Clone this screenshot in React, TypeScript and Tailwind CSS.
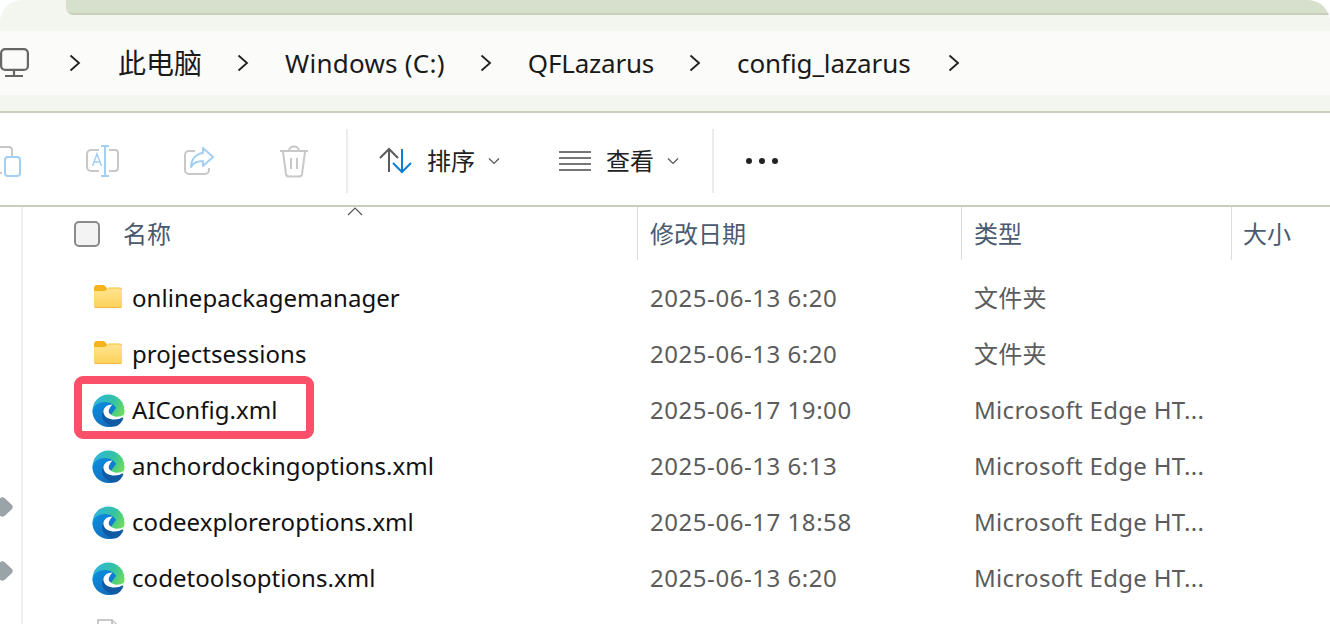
import { useId } from 'react';

const sans = "font-['Noto_Sans','Noto_Sans_CJK_SC',sans-serif]";

function Chevron() {
  return (
    <svg width="12" height="22" viewBox="0 0 12 22" fill="none" stroke="#1f1f1f" strokeWidth="1.8">
      <path d="M1.5 3.5 10 11 1.5 18.5" />
    </svg>
  );
}

function SmallChevron() {
  return (
    <svg width="12" height="8" viewBox="0 0 12 8" fill="none" stroke="#555" strokeWidth="1.2">
      <path d="M1 1.5 6 6.5 11 1.5" />
    </svg>
  );
}

function Folder() {
  const id = useId();
  return (
    <svg width="28" height="23" viewBox="0 0 28 23">
      <defs>
        <linearGradient id={id} x1="0" y1="0" x2="0" y2="1">
          <stop offset="0" stopColor="#ffe48f" />
          <stop offset="1" stopColor="#fdd25c" />
        </linearGradient>
      </defs>
      <path d="M0 3a3 3 0 0 1 3-3h7l3 3v4H0z" fill="#f5b41c" />
      <path d="M0 6h11l3-3h12a2 2 0 0 1 2 2v16a1.500 1.500 0 0 1-1.500 1.500h-25A1.500 1.500 0 0 1 0 21z" fill={`url(#${id})`} />
      <path d="M14 3h12a2 2 0 0 1 2 2" fill="none" stroke="#f5bf3a" strokeWidth="1" />
      <path d="M.5 22.500h27" stroke="#f3bb3c" strokeWidth="1" />
    </svg>
  );
}

function EdgeIcon() {
  const id = useId();
  return (
    <svg width="33" height="33" viewBox="0 0 33 33">
      <defs>
        <linearGradient id={`${id}a`} x1="0.1" y1="0.1" x2="1" y2="0.6">
          <stop offset="0" stopColor="#2db4dc" />
          <stop offset="0.55" stopColor="#35c4a0" />
          <stop offset="1" stopColor="#74de55" />
        </linearGradient>
        <linearGradient id={`${id}b`} x1="0" y1="0" x2="0.6" y2="1">
          <stop offset="0" stopColor="#0e8ee0" />
          <stop offset="1" stopColor="#1270c0" />
        </linearGradient>
      </defs>
      <circle cx="16.500" cy="16.500" r="16" fill={`url(#${id}a)`} />
      <path d="M.5 17C1.500 11 7 8 13 8c5 0 9 2 11 6l-6 8 4 10.500c-2 .500-3.500.500-5.500.500C8 33 .5 26 .5 17z" fill={`url(#${id}b)`} />
      <path d="M10 21c0 6 6.500 11.500 13 11.500 4-1 7-4 8.500-8.500L20 22l-4-6c-3 1-6 2.500-6 5z" fill="#0f5aa2" />
      <path d="M20.500 10.500C15 10.500 11 14 11.500 18.500c.5 4.500 5.500 7 11 7 3.500 0 7-1 9.500-3.500l.3-1.500c-3 2-7 2.800-10 1.800-3.500-1.200-6-3.300-5.500-5.800.4-2 1.700-4 3.700-6z" fill="#fff" />
    </svg>
  );
}

function PasteIcon() {
  return (
    <svg width="22" height="32" viewBox="0 0 22 32" fill="none" strokeWidth="2">
      <path d="M0 2h10l2 2v7" stroke="#c8c8c8" />
      <path d="M0 28H2" stroke="#c8c8c8" />
      <rect x="5" y="12" width="15" height="19" rx="3" stroke="#a3cff3" />
    </svg>
  );
}

function RenameIcon() {
  return (
    <svg width="33" height="33" viewBox="0 0 33 33" fill="none" strokeWidth="2">
      <path d="M13 5H5a4 4 0 0 0-4 4v13a4 4 0 0 0 4 4h8M23 5h6a3 3 0 0 1 3 3v15a3 3 0 0 1-3 3h-6" stroke="#c8c8c8" />
      <path d="M15 1h8M19 1v30M15 31h8" stroke="#a3cff3" />
      <path d="M6.500 21 11 9l4.500 12M8 17h6" stroke="#a3cff3" strokeWidth="1.500" />
    </svg>
  );
}

function ShareIcon() {
  return (
    <svg width="31" height="30" viewBox="0 0 31 30" fill="none" strokeWidth="2">
      <path d="M11 5H5a4 4 0 0 0-4 4v15a4 4 0 0 0 4 4h16a4 4 0 0 0 4-4v-2" stroke="#c8c8c8" />
      <path d="M19 2l10 9-10 9v-5c-5 0-9 1-12 6 0-7 4-13 12-14z" stroke="#a3cff3" strokeLinejoin="round" />
    </svg>
  );
}

function TrashIcon() {
  return (
    <svg width="30" height="33" viewBox="0 0 30 33" fill="none" stroke="#c8c8c8" strokeWidth="2">
      <path d="M1 6h28M10 6c0-6 10-6 10 0M4 7l3 22a3 3 0 0 0 3 2.500h10a3 3 0 0 0 3-2.500l3-22M12 13v11M18 13v11" />
    </svg>
  );
}

function SortIcon() {
  return (
    <svg width="33" height="28" viewBox="0 0 33 28" fill="none" strokeWidth="2">
      <path d="M10 25V2M1 11l9-9 9 9" stroke="#5a5a5a" />
      <path d="M23 2v23M14 16l9 9 9-9" stroke="#0f7fd6" />
    </svg>
  );
}

function ViewIcon() {
  return (
    <svg width="32" height="22" viewBox="0 0 32 22" stroke="#4a4a4a" strokeWidth="1.6">
      <path d="M0 2h32M0 8h32M0 14h32M0 20h32" />
    </svg>
  );
}

function NavArrow({ className }: { className: string }) {
  return (
    <svg className={`absolute left-[-23px] ${className}`} width="13" height="20" viewBox="0 0 13 20" fill="#9aa3a8">
      <path d="M0 1.500C1 0 3 0 4.500 1l7.500 7c1 1 1 3 0 4l-7.500 7C3 20 1 20 0 18.500z" />
    </svg>
  );
}

function ToolBox({ className, children }: { className: string; children: React.ReactNode }) {
  return <div className={`flex shrink-0 items-center justify-center ${className}`}>{children}</div>;
}

const rows = [
  { name: 'onlinepackagemanager', date: '2025-06-13 6:20', type: '文件夹', folder: true },
  { name: 'projectsessions', date: '2025-06-13 6:20', type: '文件夹', folder: true },
  { name: 'AIConfig.xml', date: '2025-06-17 19:00', type: 'Microsoft Edge HT...', mark: true },
  { name: 'anchordockingoptions.xml', date: '2025-06-13 6:13', type: 'Microsoft Edge HT...' },
  { name: 'codeexploreroptions.xml', date: '2025-06-17 18:58', type: 'Microsoft Edge HT...' },
  { name: 'codetoolsoptions.xml', date: '2025-06-13 6:20', type: 'Microsoft Edge HT...' },
];

export default function App() {
  return (
    <div className={`h-[624px] w-[1330px] overflow-hidden bg-white text-[#1a1a1a] ${sans}`}>
      {/* title strip and address band */}
      <div className="h-[111px] overflow-hidden rounded-t-[22px] bg-[#f3f5ef]">
        <div className="ml-[66px] h-[15px] rounded-bl-[10px] rounded-tr-[20px] border-b-2 border-[#c8d0bc] bg-[#d7e0cd]" />
        <div className="mt-[16px] flex h-[64px] items-center bg-[#fbfbfa] text-[26px]">
          <svg className="shrink-0" width="29" height="30" viewBox="0 0 29 30" fill="none" stroke="#666" strokeWidth="2.200">
            <rect x="1.100" y="1.100" width="26.800" height="20.800" rx="4" />
            <path d="M14 22v6M5 28h18" />
          </svg>
          <div className="ml-[40px] mr-[37px]"><Chevron /></div>
          <span className="text-[28px] leading-none">此电脑</span>
          <div className="ml-[35px] mr-[36px]"><Chevron /></div>
          <span className="leading-none tracking-[0.25px]">Windows (C:)</span>
          <div className="ml-[35px] mr-[36px]"><Chevron /></div>
          <span className="leading-none tracking-[-0.2px]">QFLazarus</span>
          <div className="ml-[35px] mr-[36px]"><Chevron /></div>
          <span className="leading-none tracking-[-0.1px]">config_lazarus</span>
          <div className="ml-[37px]"><Chevron /></div>
        </div>
      </div>

      {/* command bar */}
      <div className="flex h-[96px] items-center border-y-2 border-[#c8d0bc] bg-white pt-[4px]">
        <ToolBox className="w-[22px]"><PasteIcon /></ToolBox>
        <ToolBox className="ml-[64px] w-[33px]"><RenameIcon /></ToolBox>
        <ToolBox className="ml-[65px] w-[31px]"><ShareIcon /></ToolBox>
        <ToolBox className="ml-[64px] w-[30px]"><TrashIcon /></ToolBox>
        <div className="ml-[37px] h-[64px] w-[2px] bg-[#ececec]" />
        <ToolBox className="ml-[31px] w-[33px]"><SortIcon /></ToolBox>
        <span className="ml-[15px] text-[24px] leading-none text-[#222]">排序</span>
        <div className="ml-[13px]"><SmallChevron /></div>
        <ToolBox className="ml-[59px] w-[32px]"><ViewIcon /></ToolBox>
        <span className="ml-[15px] text-[24px] leading-none text-[#222]">查看</span>
        <div className="ml-[13px]"><SmallChevron /></div>
        <div className="ml-[33px] h-[64px] w-[2px] bg-[#ececec]" />
        <div className="ml-[32px] flex gap-[7px]">
          <span className="size-[6px] rounded-full bg-[#222]" />
          <span className="size-[6px] rounded-full bg-[#222]" />
          <span className="size-[6px] rounded-full bg-[#222]" />
        </div>
      </div>

      {/* file list */}
      <div className="relative ml-[21px] h-[417px] border-l-2 border-[#f0f0f0]">
        <NavArrow className="top-[290px]" />
        <NavArrow className="top-[354px]" />
        <div className="mb-[8px] flex h-[55px] pb-[2px] text-[24px] text-[#4a5a70]">
          <div className="relative flex w-[614px] items-center pl-[51px]">
            <span className="size-[26px] rounded-[5px] border-2 border-[#8a8a8a] bg-[#f3f3f3]" />
            <span className="ml-[23px] leading-none">名称</span>
            <svg className="absolute left-[324px] top-0" width="16" height="9" viewBox="0 0 16 9" fill="none" stroke="#555" strokeWidth="1.200">
              <path d="M1 8 8 1l7 7" />
            </svg>
          </div>
          <div className="flex w-[324px] items-center border-l border-[#dcdcdc] pl-[12px] leading-none">修改日期</div>
          <div className="flex w-[270px] items-center border-l border-[#dcdcdc] pl-[12px] leading-none">类型</div>
          <div className="flex flex-1 items-center border-l border-[#dcdcdc] pl-[11px] leading-none">大小</div>
        </div>
        {rows.map((row) => (
          <div key={row.name} className="flex h-[56px] items-center text-[24px]">
            <div className="relative flex w-[614px] items-center">
              <div className="ml-[69px] flex w-[33px] justify-center">
                {row.folder ? <div className="mb-[4px] mr-[1px]"><Folder /></div> : <EdgeIcon />}
              </div>
              <span className="ml-[7px] leading-none tracking-[0.05px] text-[#111]">{row.name}</span>
              {row.mark && <span className="absolute left-[51px] top-[-18px] h-[63px] w-[240px] rounded-[9px] border-[8px] border-[#fb5069]" />}
            </div>
            <div className="w-[324px] pl-[13px] leading-none tracking-[0.55px] text-[#5c5c5c]">{row.date}</div>
            <div className="w-[270px] pl-[13px] leading-none tracking-[0.3px] text-[#5c5c5c]">{row.type}</div>
          </div>
        ))}
        <svg className="ml-[74px] mt-[13px]" width="22" height="22" viewBox="0 0 22 22" fill="#fff" stroke="#b8b8b8" strokeWidth="1.500">
          <path d="M1 22V1h14l6 6v15" />
          <path d="M15 1v6h6" fill="#e8e8e8" />
        </svg>
      </div>
    </div>
  );
}
